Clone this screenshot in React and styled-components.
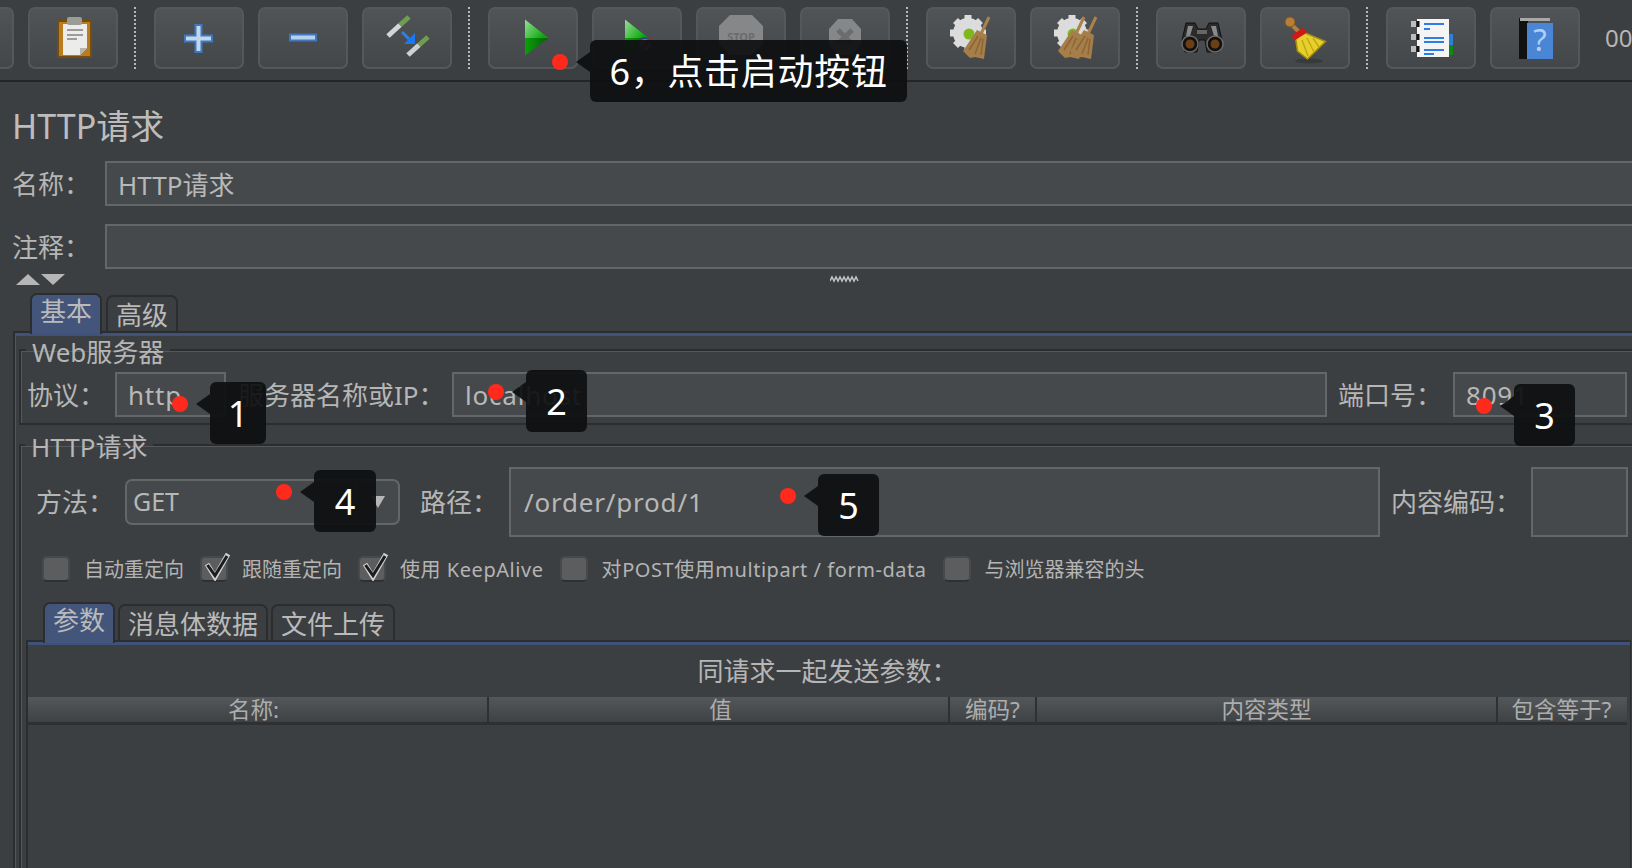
import React from 'react';
import styled, { createGlobalStyle, css } from 'styled-components';

const FONT = '"Noto Sans", "Noto Sans CJK SC", sans-serif';

const GlobalStyle = createGlobalStyle`
  html, body {
    margin: 0;
    padding: 0;
    background: #3c3f41;
  }
  * {
    box-sizing: border-box;
  }
`;

const Page = styled.div`
  position: relative;
  width: 1632px;
  height: 868px;
  overflow: hidden;
  background: #3c3f41;
  color: #b6b6b6;
  font-family: ${FONT};
  font-size: 26px;
`;

const Toolbar = styled.div`
  display: flex;
  align-items: center;
  gap: 14px;
  height: 82px;
  margin-left: -76px;
  padding-bottom: 5px;
  border-bottom: 2px solid #232527;
  white-space: nowrap;
`;

const ToolButton = styled.div`
  flex: none;
  display: flex;
  align-items: center;
  justify-content: center;
  width: 90px;
  height: 62px;
  border: 2px solid #55585a;
  border-radius: 7px;
  background: linear-gradient(#505456, #43474a);
`;

const Separator = styled.div`
  flex: none;
  width: 2px;
  height: 62px;
  margin: 0 4px 0 2px;
  border-left: 2px dotted #b8b8b8;
`;

const Timer = styled.div`
  margin-left: 11px;
  font-size: 24px;
  color: #b6b6b6;
`;

const Heading = styled.h1`
  margin: 0;
  padding: 21px 0 12px 12px;
  font-size: 34px;
  font-weight: 400;
  line-height: 46px;
  color: #bdbdbd;
`;

const NameRow = styled.div`
  display: flex;
  align-items: center;
  height: 45px;
  margin-bottom: ${(p) => p.$mb || 0}px;
  padding-left: 12px;
`;

const Label = styled.div`
  flex: none;
  width: ${(p) => p.$w}px;
  margin-left: ${(p) => p.$ml || 0}px;
  white-space: nowrap;
  line-height: 36px;
  color: #b6b6b6;
`;

const Input = styled.div`
  flex: ${(p) => (p.$w ? 'none' : 1)};
  ${(p) => p.$w && css`width: ${p.$w}px;`}
  height: ${(p) => p.$h || 45}px;
  display: flex;
  align-items: center;
  padding-left: ${(p) => p.$pad || 11}px;
  border: 2px solid #646768;
  background: #46494b;
  letter-spacing: 0.8px;
  white-space: nowrap;
  color: #b8b8b8;
`;

const WideInput = styled(Input)`
  margin-right: -6px;
  letter-spacing: 0;
`;

const SplitBar = styled.div`
  display: flex;
  align-items: center;
  height: 24px;
  padding: 0 0 4px 16px;
`;

const Triangle = styled.div`
  flex: none;
  width: 0;
  height: 0;
  border-left: 12px solid transparent;
  border-right: 12px solid transparent;
  ${(p) => (p.$down
    ? css`border-top: 11px solid #b6b6b6; margin-left: 1px;`
    : css`border-bottom: 11px solid #b6b6b6;`)}
`;

const Grip = styled.svg`
  flex: none;
  margin-left: 765px;
`;

const TabStrip = styled.div`
  display: flex;
  align-items: flex-end;
  gap: ${(p) => p.$gap}px;
  height: 38px;
  padding-left: ${(p) => p.$left}px;
`;

const Tab = styled.div`
  height: 36px;
  padding: 2px 8px 0;
  border: 2px solid #2b2d2f;
  border-bottom: none;
  border-radius: 7px 7px 0 0;
  line-height: 32px;
  white-space: nowrap;
  color: #bababa;
  background: #3c3f41;
  ${(p) => p.$active && css`
    position: relative;
    height: 41px;
    margin-bottom: -3px;
    padding-top: 0;
    background: #43557a;
  `}
`;

const OuterPanel = styled.div`
  margin: 0 -20px 0 13px;
  height: 560px;
  padding-left: 4px;
  border-top: 2px solid #2b2d2f;
  border-left: 2px solid #2b2d2f;
  box-shadow: inset 0 3px 0 #41527a, inset 1px 0 0 #4a5670;
`;

const Group = styled.fieldset`
  margin: 0 0 ${(p) => p.$mb || 0}px;
  padding: ${(p) => p.$pad};
  border: none;
  border-top: 2px solid #2b2d2f;
  border-left: 2px solid #2b2d2f;
  ${(p) => p.$closed && css`border-bottom: 2px solid #2b2d2f;`}
  box-shadow: inset 1px 1px 0 #55585a;
  min-width: 0;
`;

const Legend = styled.legend`
  margin-left: -1px;
  padding: 4px 6px 0;
  line-height: 30px;
  color: #b6b6b6;
`;

const ServerRow = styled.div`
  display: flex;
  align-items: center;
  margin-top: 5px;
`;

const RequestRow = styled.div`
  display: flex;
  align-items: center;
  margin-top: 5px;
`;

const Combo = styled.div`
  flex: none;
  display: flex;
  width: 275px;
  height: 46px;
  margin-right: 20px;
  border: 2px solid #646768;
  border-radius: 7px;
  background: #46494b;
  color: #b8b8b8;
  font-size: 25px;
`;

const ComboValue = styled.div`
  flex: 1;
  padding-left: 6px;
  line-height: 40px;
`;

const ComboArrow = styled.div`
  flex: none;
  display: flex;
  align-items: center;
  justify-content: center;
  width: 43px;
  border-left: 2px solid #55585a;
  &::after {
    content: '';
    border-left: 7px solid transparent;
    border-right: 7px solid transparent;
    border-top: 12px solid #b6b6b6;
  }
`;

const Checks = styled.div`
  display: flex;
  align-items: center;
  height: 25px;
  margin: 19px 0 21px;
  padding-left: 16px;
  gap: 16px;
  font-size: 20px;
`;

const CheckItem = styled.div`
  display: flex;
  align-items: center;
  gap: 14px;
  white-space: nowrap;
  color: #b4b4b4;
  letter-spacing: ${(p) => p.$spacing || 0}px;
`;

const CheckBox = styled.div`
  position: relative;
  flex: none;
  width: 28px;
  height: 26px;
  border: 2px solid #47494b;
  border-bottom-color: #2e3032;
  border-radius: 5px;
  background: #5b5d5f;
`;

const Tick = styled.svg`
  position: absolute;
  left: -1px;
  top: -11px;
`;

const ParamPanel = styled.div`
  width: 1605px;
  height: 230px;
  padding-right: 3px;
  border-top: 2px solid #2b2d2f;
  border-left: 2px solid #2b2d2f;
  border-right: 1px solid #2b2d2f;
  box-shadow: inset 0 3px 0 #41527a;
`;

const ParamTitle = styled.div`
  height: 55px;
  padding-top: 7px;
  text-align: center;
  line-height: 44px;
  color: #b6b6b6;
`;

const TableHead = styled.div`
  display: grid;
  grid-template-columns: 461px 461px 87px 461px 1fr;
  height: 28px;
  border-bottom: 3px solid #2e3032;
  background: linear-gradient(#53575a, #3f4245);
  font-size: 22.5px;
`;

const HeadCell = styled.div`
  text-align: center;
  line-height: 25px;
  white-space: nowrap;
  color: #adadad;
  border-right: 2px solid ${(p) => (p.$last ? 'transparent' : '#2e3032')};
  &:first-child {
    padding-right: 8px;
  }
  &:nth-child(2) {
    padding-left: 4px;
  }
`;

const Note = styled.div`
  position: absolute;
  left: ${(p) => p.$x}px;
  top: ${(p) => p.$y}px;
  display: flex;
  align-items: center;
  justify-content: center;
  width: ${(p) => p.$w}px;
  height: ${(p) => p.$h}px;
  padding-bottom: ${(p) => (p.$wide ? 4 : 0)}px;
  border-radius: 6px;
  background: rgba(14, 15, 16, 0.93);
  color: #fff;
  font-size: 36px;
  letter-spacing: ${(p) => (p.$wide ? 0.7 : 0)}px;
  white-space: nowrap;
  &::before {
    content: '';
    position: absolute;
    left: -14px;
    top: 12px;
    border-top: 10px solid transparent;
    border-bottom: 10px solid transparent;
    border-right: 14px solid rgba(14, 15, 16, 0.93);
  }
`;

const Dot = styled.span`
  position: absolute;
  left: -38px;
  top: 14px;
  width: 16px;
  height: 16px;
  border-radius: 50%;
  background: #ff2a1c;
`;

const Icon = ({ children }) => (
  <svg width="60" height="60" viewBox="0 0 60 60">{children}</svg>
);

const PlusIcon = () => (
  <Icon>
    <path d="M26.500 17h6v10.500H43v6H32.500V44h-6V33.500H16v-6h10.500z" fill="#c2d6ec" stroke="#3f78c0" strokeWidth="2" />
  </Icon>
);

const MinusIcon = () => (
  <Icon>
    <rect x="17" y="26.5" width="26" height="6" fill="#b9d0ea" stroke="#3f78c0" strokeWidth="2" />
  </Icon>
);

const ClipboardIcon = () => (
  <Icon>
    <rect x="15" y="13" width="33" height="36" fill="#b97c20" stroke="#7a4c0a" strokeWidth="2" />
    <path d="M20 16h24v24l-7 7H20z" fill="#ececea" />
    <path d="M37 47v-7h7z" fill="#b5b5b2" />
    <rect x="24" y="9" width="15" height="8" rx="2" fill="#9a9c96" />
    <path d="M24 22h16M24 27h16M24 31h10" stroke="#9c9c9c" strokeWidth="2" />
  </Icon>
);

const ToggleIcon = () => (
  <Icon>
    <path d="M11 28l12-11" stroke="#d5d5d5" strokeWidth="5" />
    <path d="M23 17l9-8" stroke="#6f9e50" strokeWidth="5" />
    <path d="M31 47l11-10" stroke="#d0d0d0" strokeWidth="5" />
    <path d="M42 37l9-8" stroke="#6f9e50" strokeWidth="5" />
    <path d="M25 24l7 7" stroke="#2f7fe6" strokeWidth="3" />
    <path d="M38 25v11H27z" fill="#1c78f0" />
  </Icon>
);

const StartIcon = () => (
  <Icon>
    <defs>
      <linearGradient id="playTop" x1="0" y1="0" x2="1" y2="0.6">
        <stop offset="0" stopColor="#9ade9a" />
        <stop offset="1" stopColor="#05a805" />
      </linearGradient>
      <linearGradient id="playBottom" x1="0" y1="0" x2="1" y2="0">
        <stop offset="0" stopColor="#0aa00a" />
        <stop offset="1" stopColor="#045f04" />
      </linearGradient>
    </defs>
    <path d="M22 11.5L45.5 30H22z" fill="url(#playTop)" />
    <path d="M22 47.5L45.5 30H22z" fill="url(#playBottom)" />
  </Icon>
);

const StartNoPauseIcon = () => (
  <Icon>
    <path d="M18 11.5L41.5 30H18z" fill="url(#playTop)" />
    <path d="M18 47.5L41.5 30H18z" fill="url(#playBottom)" />
    <circle cx="38" cy="37" r="7" fill="#6d7c90" stroke="#2b4a78" strokeWidth="2" />
    <path d="M32 44l12-14" stroke="#a02c20" strokeWidth="2" />
  </Icon>
);

const StopIcon = () => (
  <Icon>
    <path d="M19 7h22l11 11v18L41 47H19L8 36V18z" fill="#858788" />
    <text x="30" y="33" textAnchor="middle" fontSize="11" fontWeight="700" fill="#6a6c6d" fontFamily={FONT}>STOP</text>
  </Icon>
);

const ShutdownIcon = () => (
  <Icon>
    <path d="M23 11h14l9 10v16l-9 10H23l-9-10V21z" fill="#858788" />
    <path d="M23 22l14 14M37 22L23 36" stroke="#6a6c6d" strokeWidth="5" />
  </Icon>
);

const Gear = ({ cx, cy }) => (
  <g>
    <circle cx={cx} cy={cy} r="15" fill="#dcdcdc" />
    <g stroke="#dcdcdc" strokeWidth="7">
      <path d={`M${cx} ${cy - 18}v36M${cx - 18} ${cy}h36M${cx - 12.500} ${cy - 12.500}l25 25M${cx + 12.500} ${cy - 12.500}l-25 25`} />
    </g>
    <circle cx={cx + 1} cy={cy + 1} r="5.500" fill="#7eb81e" />
  </g>
);

const BroomHead = ({ dx = 0 }) => (
  <g transform={`translate(${dx} 0)`}>
    <path d="M48 9L39 28" stroke="#a9824e" strokeWidth="3" />
    <path d="M22 43L36 22l10 5-3 24-9-2-5 1z" fill="#a67e4a" />
    <path d="M28 42l9-14M34 46l6-16M40 47l2-16" stroke="#8b6536" strokeWidth="1.500" />
  </g>
);

const ClearIcon = () => (
  <Icon>
    <Gear cx={27} cy={25} />
    <BroomHead />
  </Icon>
);

const ClearAllIcon = () => (
  <Icon>
    <Gear cx={27} cy={25} />
    <BroomHead dx={-9} />
    <BroomHead dx={3} />
  </Icon>
);

const BinocularsIcon = () => (
  <Icon>
    <path d="M15 15h9l3 6h8l3-6h9l4 17-3 12H36l-2-12h-6l-2 12H14l-3-12z" fill="#2b2b2b" stroke="#111" strokeWidth="1" />
    <path d="M17 18h5l-3 10h-4zM40 18h5l2 10h-4z" fill="#8a8a8a" />
    <rect x="26" y="22" width="10" height="4" fill="#666" />
    <circle cx="19" cy="36" r="8" fill="#111" stroke="#6c6c6c" strokeWidth="1.500" />
    <circle cx="44" cy="36" r="8" fill="#111" stroke="#6c6c6c" strokeWidth="1.500" />
    <circle cx="19" cy="36" r="4.500" fill="#6e3e14" />
    <circle cx="44" cy="36" r="4.500" fill="#6e3e14" />
  </Icon>
);

const BroomIcon = () => (
  <Icon>
    <ellipse cx="34" cy="53" rx="14" ry="2.500" fill="#383b3d" />
    <path d="M15 15l10 10" stroke="#b67f38" strokeWidth="4" />
    <circle cx="15" cy="14" r="5" fill="#b67f38" stroke="#7f5518" strokeWidth="1" />
    <path d="M20.500 30l10-5 20 8.500L32.500 51l-10-8z" fill="#e7cf2c" stroke="#a58d10" strokeWidth="1.500" />
    <path d="M27 32l6 16M32 30l7 14M38 30l6 9" stroke="#c2a818" strokeWidth="1.500" />
    <path d="M18 30l12-8" stroke="#d01818" strokeWidth="6" />
  </Icon>
);

const LogIcon = () => (
  <Icon>
    <rect x="48" y="26" width="4" height="11" fill="#2f7fd8" />
    <rect x="48" y="37" width="4" height="10" fill="#0f8a10" />
    <rect x="16" y="11" width="32" height="38" fill="#f4f4f4" />
    <path d="M17 13v6M17 26v6M17 38v6" stroke="#111" strokeWidth="3" />
    <path d="M10 16h5M10 29h5M10 41h5" stroke="#bdbdbd" strokeWidth="6" />
    <path d="M23 16h20M23 30h20M23 34h20M23 42h20" stroke="#2e7ce6" strokeWidth="2" />
    <path d="M23 21h6M23 46h10" stroke="#2e7ce6" strokeWidth="2" />
  </Icon>
);

const HelpIcon = () => (
  <Icon>
    <rect x="14" y="10" width="9" height="41" fill="#111" />
    <rect x="22" y="15" width="26" height="36" fill="#4a86d6" />
    <rect x="15" y="10" width="30" height="3" fill="#a8a8a8" />
    <text x="35" y="43" textAnchor="middle" fontSize="31" fill="#b4cff0" fontFamily={FONT}>?</text>
  </Icon>
);

const Checked = () => (
  <Tick width="30" height="34" viewBox="0 0 30 34">
    <path d="M6 17l8 13L27 7" fill="none" stroke="#cfcfcf" strokeWidth="5" />
    <path d="M6.500 18l7.500 10.500L26 9" fill="none" stroke="#1c1c1c" strokeWidth="3" />
  </Tick>
);

const toolbarGroups = [
  [null, <ClipboardIcon key="clip" />],
  [<PlusIcon key="plus" />, <MinusIcon key="minus" />, <ToggleIcon key="toggle" />],
  [<StartIcon key="start" />, <StartNoPauseIcon key="nopause" />, <StopIcon key="stop" />, <ShutdownIcon key="shutdown" />],
  [<ClearIcon key="clear" />, <ClearAllIcon key="clearall" />],
  [<BinocularsIcon key="find" />, <BroomIcon key="broom" />],
  [<LogIcon key="log" />, <HelpIcon key="help" />],
];

const checks = [
  { text: '自动重定向' },
  { text: '跟随重定向', on: true },
  { text: '使用 KeepAlive', on: true, spacing: 0.55 },
  { text: '对POST使用multipart / form-data', spacing: 0.55 },
  { text: '与浏览器兼容的头' },
];

const columns = ['名称:', '值', '编码?', '内容类型', '包含等于?'];

const notes = [
  { x: 590, y: 40, w: 317, h: 62, text: '6，点击启动按钮', wide: true },
  { x: 210, y: 382, w: 56, h: 62, text: '1' },
  { x: 526, y: 370, w: 61, h: 62, text: '2' },
  { x: 1514, y: 384, w: 61, h: 62, text: '3' },
  { x: 314, y: 470, w: 62, h: 62, text: '4' },
  { x: 818, y: 474, w: 61, h: 62, text: '5' },
];

export default function App() {
  return (
    <Page>
      <GlobalStyle />
      <Toolbar>
        {toolbarGroups.map((group, i) => (
          <React.Fragment key={i}>
            {i > 0 && <Separator />}
            {group.map((icon, j) => <ToolButton key={j}>{icon}</ToolButton>)}
          </React.Fragment>
        ))}
        <Timer>00:00:00</Timer>
      </Toolbar>

      <Heading>HTTP请求</Heading>
      <NameRow $mb={18}>
        <Label $w={93}>名称：</Label>
        <WideInput>HTTP请求</WideInput>
      </NameRow>
      <NameRow>
        <Label $w={93}>注释：</Label>
        <WideInput />
      </NameRow>

      <SplitBar>
        <Triangle />
        <Triangle $down />
        <Grip width="30" height="8" viewBox="0 0 30 8">
          <path d="M0 6l2-4 2 4 2-4 2 4 2-4 2 4 2-4 2 4 2-4 2 4 2-4 2 4 2-4 2 4" fill="none" stroke="#c4c4c4" strokeWidth="1.500" />
        </Grip>
      </SplitBar>

      <TabStrip $left={30} $gap={4}>
        <Tab $active>基本</Tab>
        <Tab>高级</Tab>
      </TabStrip>
      <OuterPanel>
        <Group $pad="0 25px 6px 6px" $closed $mb={3}>
          <Legend>Web服务器</Legend>
          <ServerRow>
            <Label $w={88}>协议：</Label>
            <Input $w={111}>http</Input>
            <Label $w={214} $ml={12}>服务器名称或IP：</Label>
            <Input>localhost</Input>
            <Label $w={115} $ml={11}>端口号：</Label>
            <Input $w={174}>8091</Input>
          </ServerRow>
        </Group>

        <Group $pad="0 24px 0 5px">
          <Legend>HTTP请求</Legend>
          <RequestRow>
            <Label $w={89} $ml={10}>方法：</Label>
            <Combo>
              <ComboValue>GET</ComboValue>
              <ComboArrow />
            </Combo>
            <Label $w={89}>路径：</Label>
            <Input $h={70} $pad={13}>/order/prod/1</Input>
            <Label $w={140} $ml={11}>内容编码：</Label>
            <Input $w={97} $h={70} />
          </RequestRow>

          <Checks>
            {checks.map((c) => (
              <CheckItem key={c.text} $spacing={c.spacing}>
                <CheckBox>{c.on && <Checked />}</CheckBox>
                {c.text}
              </CheckItem>
            ))}
          </Checks>

          <TabStrip $left={17} $gap={3}>
            <Tab $active>参数</Tab>
            <Tab>消息体数据</Tab>
            <Tab>文件上传</Tab>
          </TabStrip>
          <ParamPanel>
            <ParamTitle>同请求一起发送参数：</ParamTitle>
            <TableHead>
              {columns.map((c, i) => (
                <HeadCell key={c} $last={i === columns.length - 1}>{c}</HeadCell>
              ))}
            </TableHead>
          </ParamPanel>
        </Group>
      </OuterPanel>

      {notes.map((n) => (
        <Note key={n.text} $x={n.x} $y={n.y} $w={n.w} $h={n.h} $wide={n.wide}>
          <Dot />
          {n.text}
        </Note>
      ))}
    </Page>
  );
}
